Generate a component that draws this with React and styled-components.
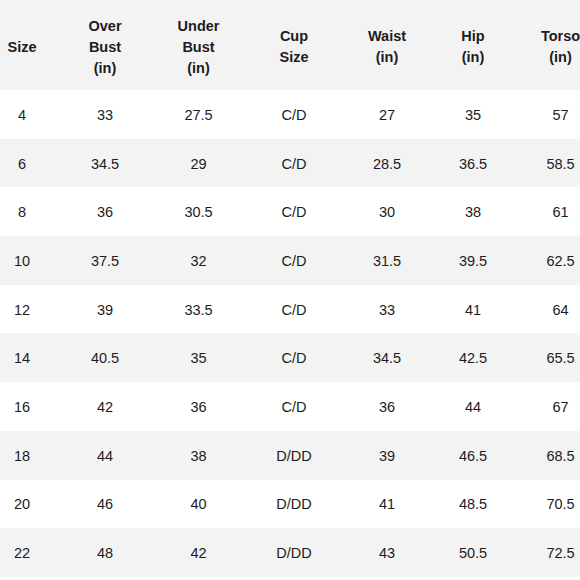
import React from 'react'
import styled, { createGlobalStyle } from 'styled-components';

const GlobalStyle = createGlobalStyle`
  html, body {
    margin: 0;
    padding: 0;
    background: #ffffff;
  }
  body {
    width: 580px;
    height: 580px;
    overflow: hidden;
    font-family: "Liberation Sans", Arial, Helvetica, sans-serif;
    color: #1c1c1c;
  }
`;

const COLS = '44px 122px 65px 126px 60px 112px 63px';

const Table = styled.div`
  display: flex;
  flex-direction: column;
  width: 592px;
`;

const HeadRow = styled.div`
  display: grid;
  grid-template-columns: ${COLS};
  height: 90px;
  padding-top: 4px;
  box-sizing: border-box;
  background-color: #f3f3f3;
`;

const Row = styled.div`
  display: grid;
  grid-template-columns: ${COLS};
  height: 48.7px;
  padding-top: 2px;
  box-sizing: border-box;
  background-color: ${props => (props.$shaded ? '#f3f3f3' : '#ffffff')};
`;

const HeadCell = styled.div`
  display: flex;
  align-items: center;
  justify-content: center;
  text-align: center;
  font-weight: bold;
  font-size: 14.5px;
  line-height: 21px;
  white-space: pre-line;
`;

const Cell = styled.div`
  display: flex;
  align-items: center;
  justify-content: center;
  font-size: 14.5px;
  line-height: 21px;
`;

const headers = [
  'Size',
  'Over\nBust\n(in)',
  'Under\nBust\n(in)',
  'Cup\nSize',
  'Waist\n(in)',
  'Hip\n(in)',
  'Torso\n(in)',
];

const rows = [
  ['4', '33', '27.5', 'C/D', '27', '35', '57'],
  ['6', '34.5', '29', 'C/D', '28.5', '36.5', '58.5'],
  ['8', '36', '30.5', 'C/D', '30', '38', '61'],
  ['10', '37.5', '32', 'C/D', '31.5', '39.5', '62.5'],
  ['12', '39', '33.5', 'C/D', '33', '41', '64'],
  ['14', '40.5', '35', 'C/D', '34.5', '42.5', '65.5'],
  ['16', '42', '36', 'C/D', '36', '44', '67'],
  ['18', '44', '38', 'D/DD', '39', '46.5', '68.5'],
  ['20', '46', '40', 'D/DD', '41', '48.5', '70.5'],
  ['22', '48', '42', 'D/DD', '43', '50.5', '72.5'],
];

const App = () => {
  return (
    <>
      <GlobalStyle />
      <Table>
        <HeadRow>
          {headers.map(h => (
            <HeadCell key={h}>{h}</HeadCell>
          ))}
        </HeadRow>
        {rows.map((r, i) => (
          <Row key={r[0]} $shaded={i % 2 === 1}>
            {r.map((v, j) => (
              <Cell key={j}>{v}</Cell>
            ))}
          </Row>
        ))}
      </Table>
    </>
  )
}

export default App
